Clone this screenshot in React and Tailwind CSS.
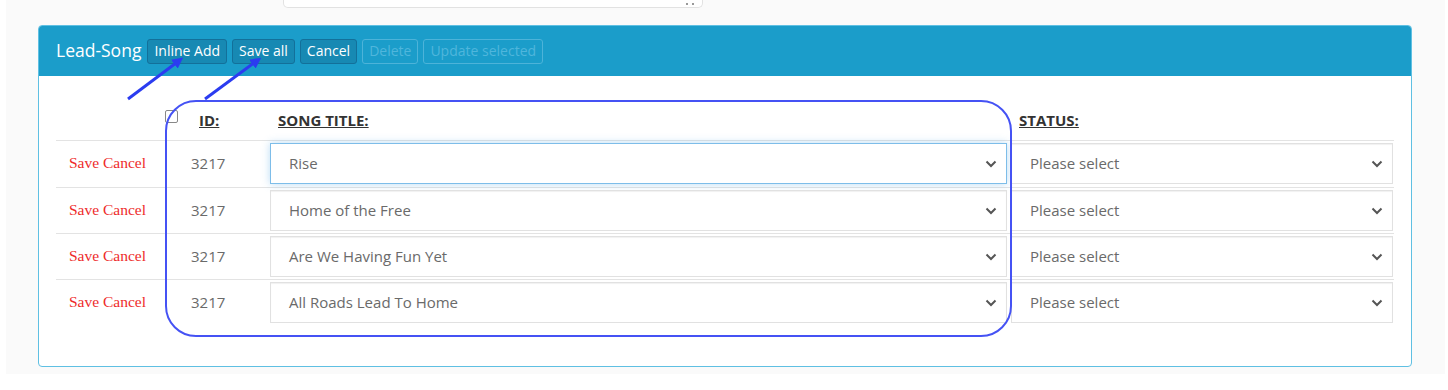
import React from "react";

const songs = ["Rise", "Home of the Free", "Are We Having Fun Yet", "All Roads Lead To Home"];

const Chevron = () => (
  <svg width="12" height="8" viewBox="0 0 12 8" className="shrink-0">
    <polyline points="1.5,1.5 6,6 10.5,1.5" fill="none" stroke="#555" strokeWidth="2" />
  </svg>
);

const SelectBox = ({ value, focused }) => (
  <div
    className={`h-[41px] flex items-center justify-between pl-[18px] pr-[9px] bg-white border text-[15px] text-[#6a6a6a] ${
      focused
        ? "border-[#7dbde9] shadow-[0_0_8px_rgba(102,175,233,0.45)]"
        : "border-[#e1e1e1] shadow-[inset_0_1px_1px_rgba(0,0,0,0.06)]"
    }`}
  >
    <span>{value}</span>
    <Chevron />
  </div>
);

const HeaderButton = ({ label, disabled }) => (
  <button
    disabled={disabled}
    className={`h-[25px] px-[6px] rounded-[3px] border text-[14px] leading-none ${
      disabled
        ? "bg-[#1b9dca] border-[#4db3d9] text-[#4fb6dc]"
        : "bg-[#1789b3] border-[#13709a] text-white"
    }`}
  >
    {label}
  </button>
);

const App = () => {
  return (
    <div className="h-[390px] bg-white" style={{ fontFamily: "'Open Sans', sans-serif" }}>
      <div className="relative ml-[6px] w-[1439px] h-[374px] bg-[#fafafa]">
        {/* top search field, cut off */}
        <div className="ml-[277px] w-[420px] h-[8px] bg-white border border-t-0 border-[#e2e2e2] rounded-b-[5px] flex justify-end items-center pr-[8px] gap-[4px]">
          <span className="w-[2px] h-[2px] bg-[#999]" />
          <span className="w-[2px] h-[2px] bg-[#999]" />
        </div>

        {/* panel */}
        <div className="mt-[17px] ml-[32px] w-[1374px] h-[342px] border border-[#5fc0e3] rounded-[4px] bg-white overflow-hidden">
          <div className="h-[50px] bg-[#1b9dca] flex items-center pl-[17px] gap-[5px]">
            <span className="text-white text-[17.5px] mr-[1px] mb-[2px]">Lead-Song</span>
            <HeaderButton label="Inline Add" />
            <HeaderButton label="Save all" />
            <HeaderButton label="Cancel" />
            <HeaderButton label="Delete" disabled />
            <HeaderButton label="Update selected" disabled />
          </div>

          <div className="px-[17px] pt-[34px]">
            {/* table header */}
            <div className="grid grid-cols-[109px_103px_741px_1fr] pb-[10px] text-[15px] leading-[20px] font-bold text-[#333]">
              <div />
              <div className="flex items-start">
                <span className="w-[13px] h-[13px] border border-[#888] rounded-[2px] bg-white" />
                <span className="ml-[21px] underline">ID:</span>
              </div>
              <div className="pl-[10px] underline">SONG TITLE:</div>
              <div className="pl-[10px] underline">STATUS:</div>
            </div>

            {/* rows */}
            {songs.map((song, i) => (
              <div
                key={song}
                className={`grid grid-cols-[109px_103px_741px_1fr] items-center border-t border-[#e3e3e3] pt-[2px] ${
                  i === 0 ? "pb-[3px]" : "pb-[2px]"
                }`}
              >
                <div
                  className="pl-[13px] text-[15.5px] text-[#ee2b2b] mb-[2px]"
                  style={{ fontFamily: "'Liberation Serif', serif" }}
                >
                  Save Cancel
                </div>
                <div className="pl-[26px] text-[15px] text-[#6a6a6a]">3217</div>
                <div className="px-[2px]">
                  <SelectBox value={song} focused={i === 0} />
                </div>
                <div className="pl-[2px] pr-[1px]">
                  <SelectBox value="Please select" />
                </div>
              </div>
            ))}
          </div>
        </div>

        {/* annotation overlay */}
        <svg className="absolute left-0 top-0 pointer-events-none" width="1439" height="374">
          <defs>
            <marker id="head" markerWidth="11" markerHeight="11" refX="7" refY="5.5" orient="auto" markerUnits="userSpaceOnUse">
              <path d="M0,0 L11,5.5 L0,11 z" fill="#2b3cf0" />
            </marker>
          </defs>
          <rect x="160" y="101" width="845" height="235" rx="30" fill="none" stroke="#4552f4" strokeWidth="2" />
          <line x1="122" y1="99" x2="174" y2="60" stroke="#2b3cf0" strokeWidth="3" markerEnd="url(#head)" />
          <line x1="199" y1="99" x2="252" y2="60" stroke="#2b3cf0" strokeWidth="3" markerEnd="url(#head)" />
        </svg>
      </div>
    </div>
  );
};

export default App;
